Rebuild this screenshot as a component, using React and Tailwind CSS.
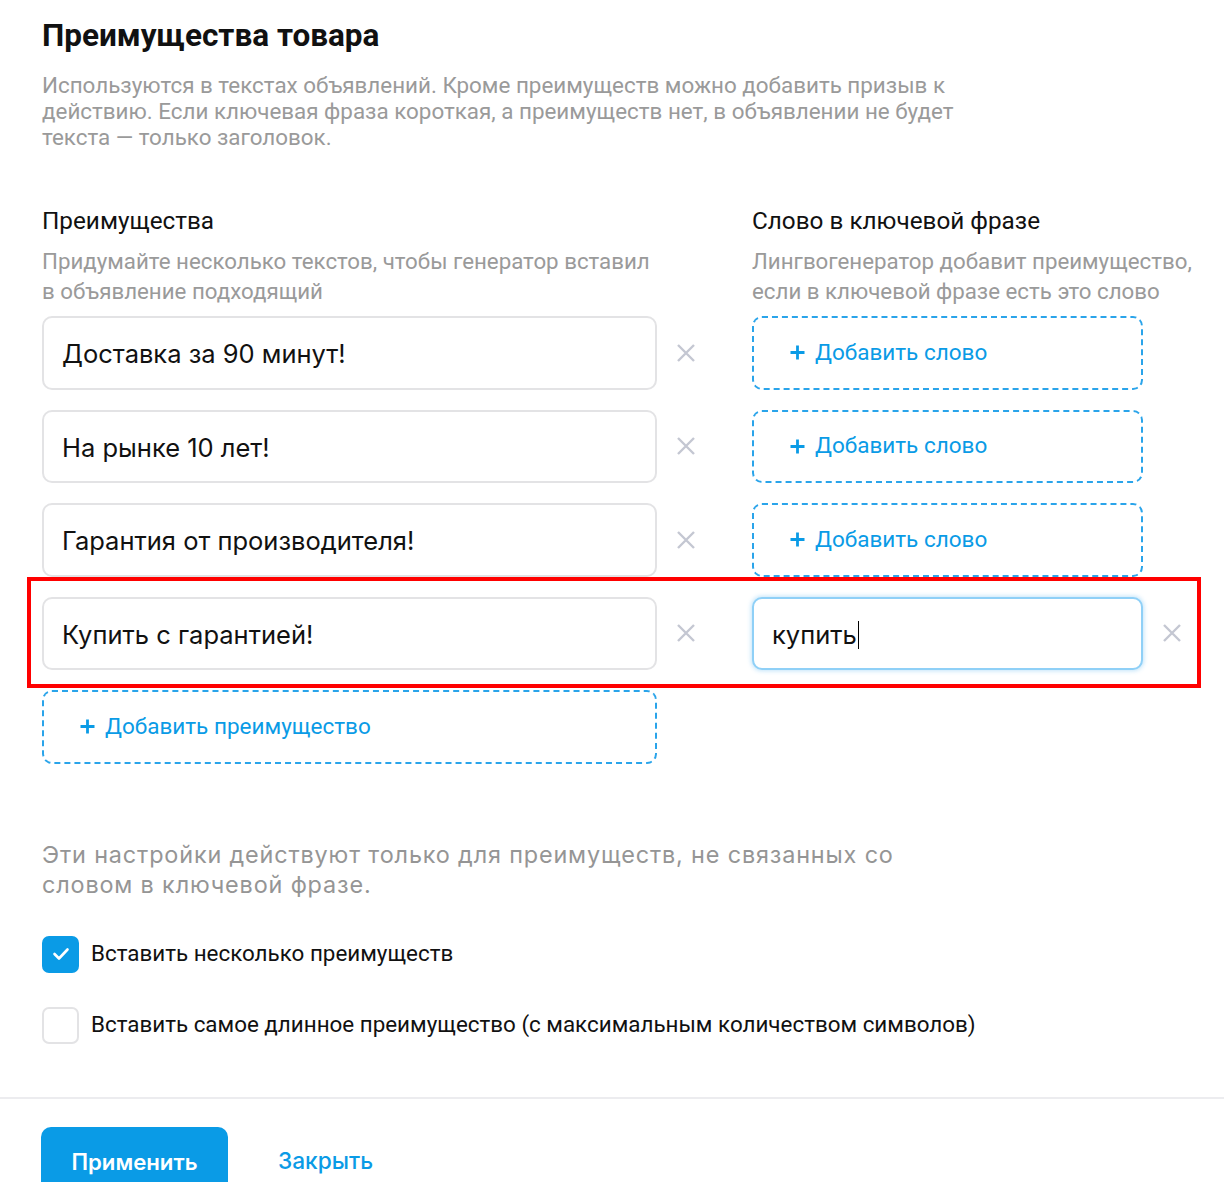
import React from "react";

const XIcon = () => (
  <svg width="20" height="20" viewBox="0 0 20 20" fill="none">
    <path d="M2 2 L18 18 M18 2 L2 18" stroke="#c4c7d2" strokeWidth="2.4" strokeLinecap="butt" />
  </svg>
);

const Plus = () => (
  <svg width="15" height="15" viewBox="0 0 15 15" fill="none">
    <path d="M7.5 0.5 V14.5 M0.5 7.5 H14.5" stroke="#0a9be6" strokeWidth="2.8" />
  </svg>
);

const Input = ({ value, focused }) => (
  <div
    className={
      "h-[73.5px] w-full rounded-[10px] border-2 bg-white flex items-center pl-[18px] pt-[3px] text-[25.5px] text-[#111] font-['Inter','Roboto',sans-serif] " +
      (focused ? "border-[#8fd0f7] shadow-[0_0_4px_1px_rgba(120,195,245,0.45)]" : "border-[#e3e3e5]")
    }
  >
    {value}
    {focused && <span className="inline-block w-[1.5px] h-[28px] bg-black ml-[1px]" />}
  </div>
);

const AddBox = ({ label, pl }) => (
  <div
    className={
      "h-[73.5px] w-full rounded-[10px] border-2 border-dashed border-[#2aa4ea] flex items-center gap-[10px] text-[22.5px] text-[#0a9be6] font-['Roboto',sans-serif] " +
      pl
    }
  >
    <Plus />
    <span>{label}</span>
  </div>
);

const XCell = () => (
  <div className="w-[58px] h-[73.5px] flex items-center justify-center shrink-0">
    <XIcon />
  </div>
);

const rows = [
  { text: "Доставка за 90 минут!" },
  { text: "На рынке 10 лет!" },
  { text: "Гарантия от производителя!" },
];

export default function App() {
  return (
    <div className="w-[1224px] h-[1182px] overflow-hidden bg-white font-['Roboto',sans-serif]">
      <div className="pl-[42px] pt-[18px]">
        <h1 className="text-[31.5px] leading-[36px] font-bold text-[#111]">Преимущества товара</h1>
        <p className="mt-[18px] w-[925px] text-[22.4px] leading-[26px] text-[#9a9a9a]">
          Используются в текстах объявлений. Кроме преимуществ можно добавить призыв к действию. Если ключевая фраза короткая, а преимуществ нет, в объявлении не будет текста — только заголовок.
        </p>

        <div className="mt-[56px] grid grid-cols-[710px_1fr]">
          <div>
            <div className="text-[24.3px] leading-[30px] text-[#111]">Преимущества</div>
            <div className="mt-[10px] w-[615px] text-[22.3px] leading-[30px] text-[#9a9a9a]">
              Придумайте несколько текстов, чтобы генератор вставил в объявление подходящий
            </div>
          </div>
          <div>
            <div className="text-[24.3px] leading-[30px] text-[#111]">Слово в ключевой фразе</div>
            <div className="mt-[10px] w-[448px] text-[22.3px] leading-[30px] text-[#9a9a9a]">
              Лингвогенератор добавит преимущество, если в ключевой фразе есть это слово
            </div>
          </div>
        </div>

        <div className="mt-[10px] flex flex-col gap-[20px]">
          {rows.map((r) => (
            <div key={r.text} className="flex">
              <div className="w-[615px] shrink-0">
                <Input value={r.text} />
              </div>
              <XCell />
              <div className="w-[37px] shrink-0" />
              <div className="w-[391px] shrink-0">
                <AddBox label="Добавить слово" pl="pl-[36px]" />
              </div>
            </div>
          ))}
          <div className="relative flex">
            <div className="absolute left-[-15px] top-[-20px] w-[1174px] h-[111px] border-[4px] border-[#ff0000] pointer-events-none" />
            <div className="w-[615px] shrink-0">
              <Input value="Купить с гарантией!" />
            </div>
            <XCell />
            <div className="w-[37px] shrink-0" />
            <div className="w-[391px] shrink-0">
              <Input value="купить" focused />
            </div>
            <XCell />
          </div>
          <div className="w-[615px]">
            <AddBox label="Добавить преимущество" pl="pl-[36px]" />
          </div>
        </div>

        <p className="mt-[76px] w-[900px] text-[23.4px] leading-[30px] tracking-[0.85px] text-[#959595] font-['Inter','Roboto',sans-serif]">
          Эти настройки действуют только для преимуществ, не связанных со словом в ключевой фразе.
        </p>

        <div className="mt-[36px] flex items-center gap-[12px]">
          <div className="w-[37px] h-[37px] rounded-[7px] bg-[#0a9be6] flex items-center justify-center">
            <svg width="18" height="14" viewBox="0 0 18 14" fill="none">
              <path d="M2.5 7 L7 11.5 L15.5 2.5" stroke="white" strokeWidth="2.6" strokeLinecap="round" strokeLinejoin="round" />
            </svg>
          </div>
          <span className="text-[22.4px] text-[#111]">Вставить несколько преимуществ</span>
        </div>
        <div className="mt-[34px] flex items-center gap-[12px]">
          <div className="w-[37px] h-[37px] rounded-[7px] border-2 border-[#e3e3e5] bg-white" />
          <span className="text-[22.4px] text-[#111]">Вставить самое длинное преимущество (с максимальным количеством символов)</span>
        </div>
      </div>

      <div className="mt-[53px] border-t-2 border-[#ececef]" />

      <div className="pl-[41px] pt-[28px] flex items-center gap-[50px]">
        <button className="w-[187px] h-[70px] rounded-[10px] bg-[#0a9be6] text-white text-[22.2px] font-semibold font-['Inter','Roboto',sans-serif]">
          Применить
        </button>
        <span className="text-[22.7px] font-medium text-[#0a9be6] font-['Inter','Roboto',sans-serif]">Закрыть</span>
      </div>
    </div>
  );
}
